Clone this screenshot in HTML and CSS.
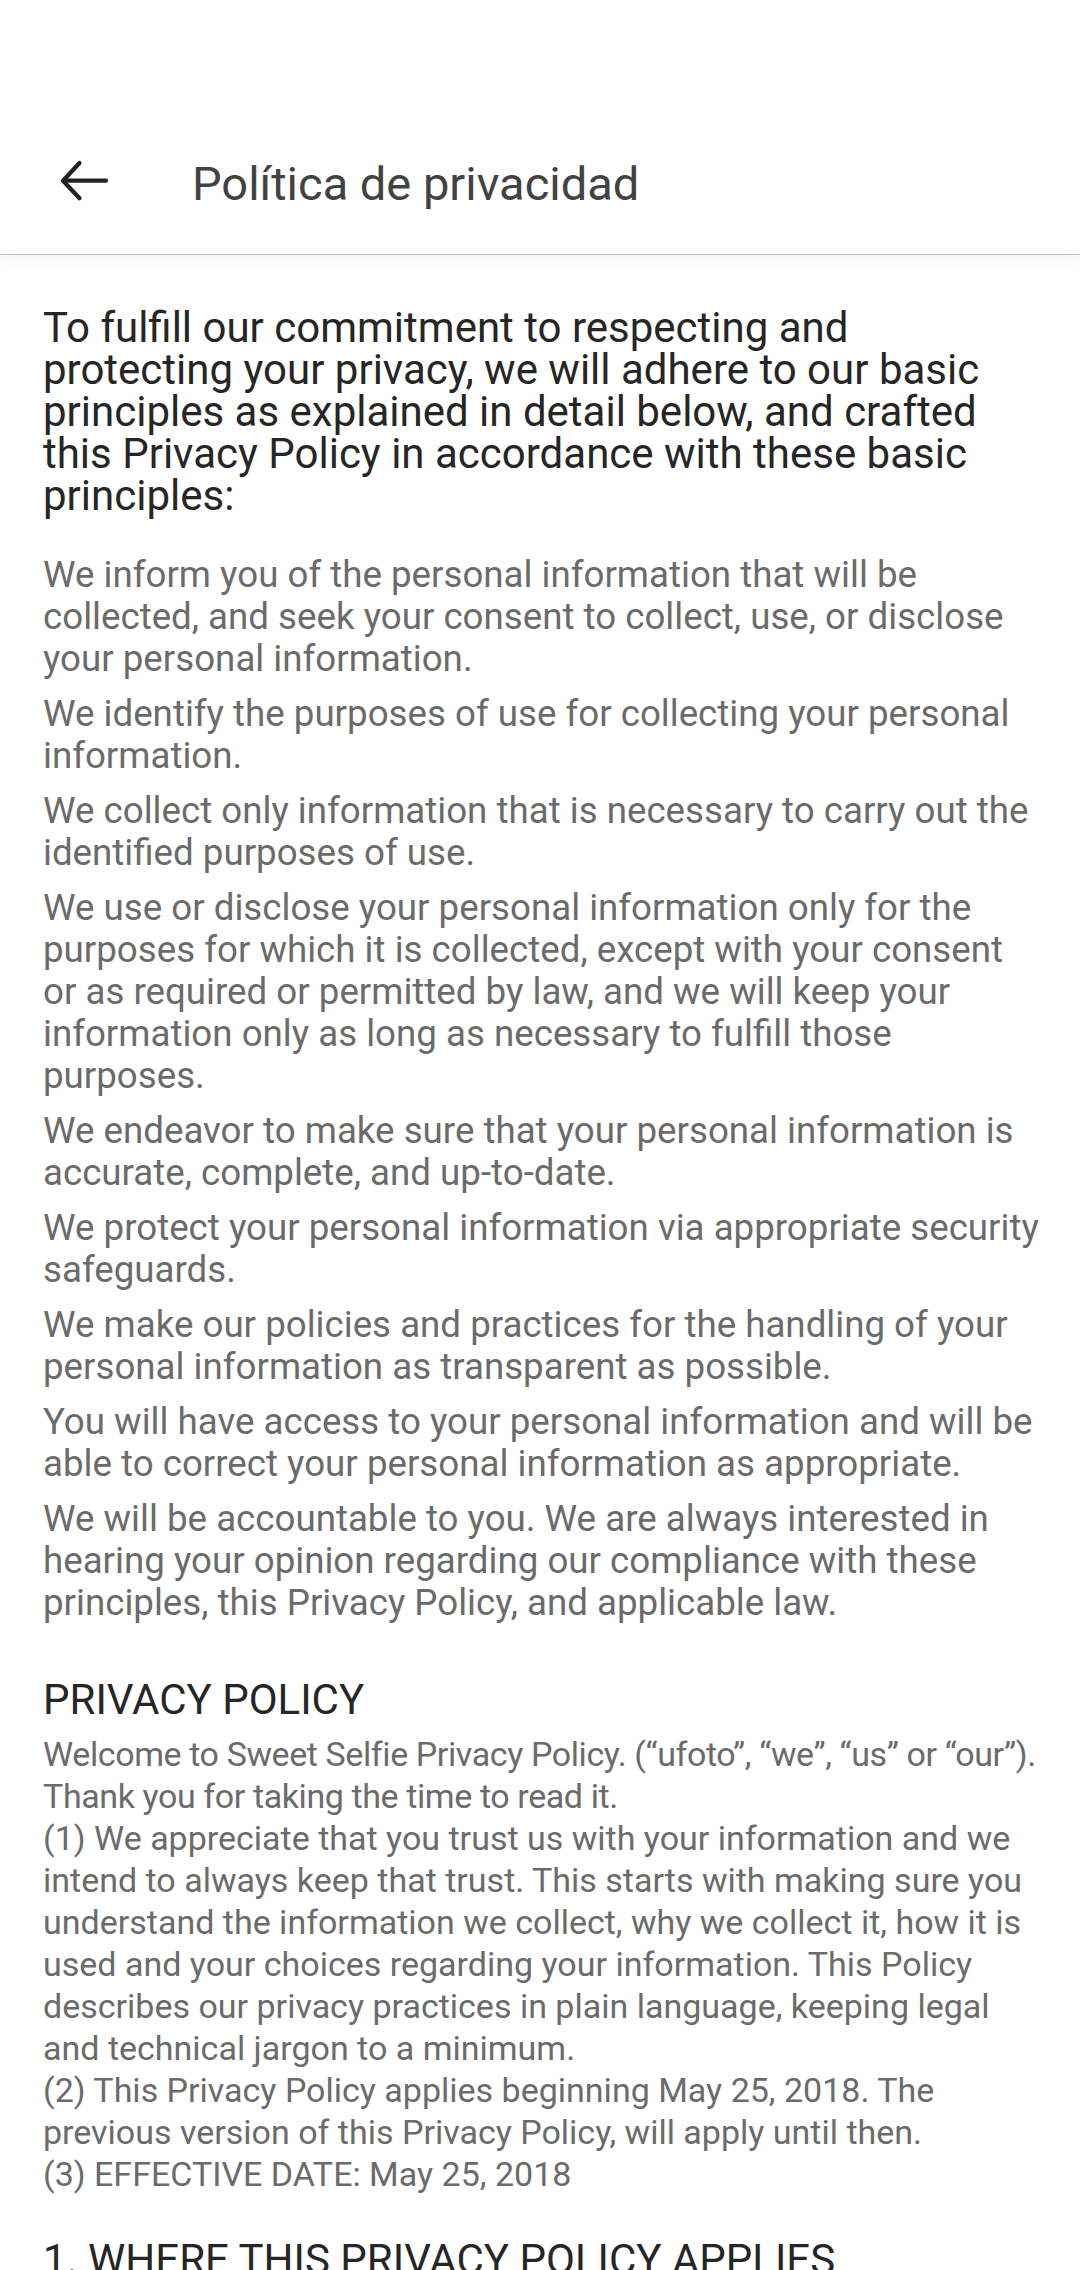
FILE: index.html
```html
<!DOCTYPE html>
<html lang="es">
<head>
<meta charset="utf-8">
<title>Política de privacidad</title>
<link rel="stylesheet" href="styles.css">
</head>
<body>
<header class="appbar">
  <div class="status"></div>
  <div class="toolbar">
    <button class="back" aria-label="Atrás">
      <svg width="56" height="56" viewBox="0 0 56 56" aria-hidden="true">
        <path d="M5.5 27.7 H48" fill="none" stroke="#222" stroke-width="4.2" stroke-linecap="round"/>
        <path d="M21.5 10 L5 27.7 L21.5 45.3" fill="none" stroke="#222" stroke-width="4.2" stroke-linecap="round" stroke-linejoin="round"/>
      </svg>
    </button>
    <h1 class="title">Política de privacidad</h1>
  </div>
</header>
<main class="content">
  <p class="lead">To fulfill our commitment to respecting and protecting your privacy, we will adhere to our basic principles as explained in detail below, and crafted this Privacy Policy in accordance with these basic principles:</p>
  <ul class="principles">
    <li>We inform you of the personal information that will be collected, and seek your consent to collect, use, or disclose your personal information.</li>
    <li>We identify the purposes of use for collecting your personal information.</li>
    <li>We collect only information that is necessary to carry out the identified purposes of use.</li>
    <li>We use or disclose your personal information only for the purposes for which it is collected, except with your consent or as required or permitted by law, and we will keep your information only as long as necessary to fulfill those purposes.</li>
    <li>We endeavor to make sure that your personal information is accurate, complete, and up-to-date.</li>
    <li>We protect your personal information via appropriate security safeguards.</li>
    <li>We make our policies and practices for the handling of your personal information as transparent as possible.</li>
    <li>You will have access to your personal information and will be able to correct your personal information as appropriate.</li>
    <li>We will be accountable to you. We are always interested in hearing your opinion regarding our compliance with these principles, this Privacy Policy, and applicable law.</li>
  </ul>
  <h2 class="heading">PRIVACY POLICY</h2>
  <div class="policy">
    <p class="welcome">Welcome to Sweet Selfie Privacy Policy. (“ufoto”, “we”, “us” or “our”). Thank you for taking the time to read it.</p>
    <p>(1) We appreciate that you trust us with your information and we intend to always keep that trust. This starts with making sure you understand the information we collect, why we collect it, how it is used and your choices regarding your information. This Policy describes our privacy practices in plain language, keeping legal and technical jargon to a minimum.</p>
    <p>(2) This Privacy Policy applies beginning May 25, 2018. The previous version of this Privacy Policy, will apply until then.</p>
    <p>(3) EFFECTIVE DATE: May 25, 2018</p>
  </div>
  <h2 class="heading section">1. WHERE THIS PRIVACY POLICY APPLIES</h2>
</main>
</body>
</html>
```
FILE: styles.css
```css
* { box-sizing: border-box; }
html, body { margin: 0; padding: 0; background: #fff; }
body {
  font-family: Roboto, "Noto Sans", "Liberation Sans", sans-serif;
  width: 1080px;
  height: 2270px;
  overflow: hidden;
}
.appbar {
  background: #fff;
  border-bottom: 1px solid #bdbdbd;
  box-shadow: 0 2px 18px rgba(0,0,0,0.06);
  position: relative;
  z-index: 1;
}
.status { height: 108px; }
.toolbar {
  height: 146px;
  display: flex;
  align-items: center;
}
.back {
  width: 56px;
  height: 56px;
  margin-left: 58px;
  padding: 0;
  border: 0;
  background: none;
  display: flex;
}
.title {
  margin: 4px 0 0 78px;
  font-size: 47px;
  font-weight: 400;
  color: #424242;
  line-height: 1;
}
.content {
  padding: 52px 39px 0 43px;
}
.lead {
  margin: 0 40px 0 0;
  font-size: 42px;
  line-height: 42px;
  color: #262626;
}
.principles {
  list-style: none;
  margin: 37px 0 0 0;
  padding: 0;
  display: flex;
  flex-direction: column;
  gap: 13px;
}
.principles li {
  font-size: 36.7px;
  line-height: 42px;
  color: #6b6b6b;
}
.heading {
  margin: 55px 0 0 0;
  font-size: 42px;
  font-weight: 400;
  line-height: 42px;
  color: #262626;
}
.policy { margin-top: 12px; }
.policy p {
  margin: 0;
  font-size: 34px;
  line-height: 42px;
  color: #6b6b6b;
}
.policy .welcome { letter-spacing: -0.4px; }
.heading.section { margin-top: 44px; }
```
